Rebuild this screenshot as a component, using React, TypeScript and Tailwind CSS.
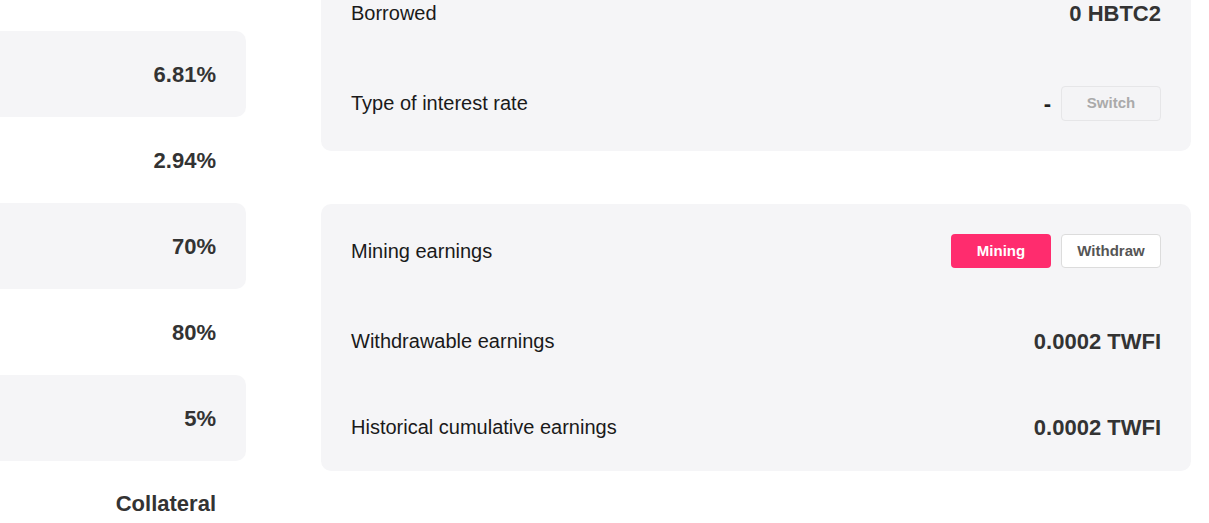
import React from "react";

type Stat = { value: string; shaded: boolean };

const stats: Stat[] = [
  { value: "", shaded: false },
  { value: "6.81%", shaded: true },
  { value: "2.94%", shaded: false },
  { value: "70%", shaded: true },
  { value: "80%", shaded: false },
  { value: "5%", shaded: true },
];

function Row({
  label,
  children,
  tall,
}: {
  label: string;
  children: React.ReactNode;
  tall?: boolean;
}) {
  return (
    <div
      className={`flex items-center justify-between px-[30px] ${
        tall ? "h-[94px]" : "h-[86px]"
      }`}
    >
      <span className="text-[20px] text-[#1a1a1a]">{label}</span>
      <div className="flex items-center gap-[10px]">{children}</div>
    </div>
  );
}

function Value({ children }: { children: React.ReactNode }) {
  return <span className="text-[22px] font-bold text-[#333]">{children}</span>;
}

export default function App() {
  return (
    <div className="h-[523px] w-[1209px] overflow-hidden bg-white font-['Liberation_Sans',Arial,sans-serif]">
      <div className="flex gap-[75px]">
        {/* left stats column */}
        <div className="-mt-[55px] w-[246px] shrink-0">
          {stats.map((s, i) => (
            <div
              key={i}
              className={`flex h-[86px] items-center justify-end rounded-r-[10px] pr-[30px] ${
                s.shaded ? "bg-[#f5f5f7]" : ""
              }`}
            >
              <span className="text-[22px] font-bold text-[#333]">{s.value}</span>
            </div>
          ))}
          <div className="flex h-[84px] items-center justify-end pr-[30px]">
            <span className="text-[22px] font-bold text-[#333]">Collateral</span>
          </div>
        </div>

        {/* right cards */}
        <div className="mr-[18px] flex flex-1 flex-col gap-[53px]">
          <div className="-mt-[34px] rounded-b-[10px] bg-[#f5f5f7] pb-[5px]">
            <Row label="Borrowed" tall>
              <Value>0 HBTC2</Value>
            </Row>
            <Row label="Type of interest rate">
              <span className="text-[22px] font-bold text-[#222]">-</span>
              <button className="h-[35px] w-[100px] rounded-[4px] border border-[#e6e6e8] bg-[#f4f4f6] text-[15px] font-bold text-[#aaa]">
                Switch
              </button>
            </Row>
          </div>

          <div className="rounded-[10px] bg-[#f5f5f7] pb-px">
            <Row label="Mining earnings" tall>
              <button className="h-[34px] w-[100px] rounded-[4px] bg-[#ff2c6e] text-[15px] font-bold text-white">
                Mining
              </button>
              <button className="h-[34px] w-[100px] rounded-[4px] border border-[#dcdcdc] bg-white text-[15px] font-bold text-[#555]">
                Withdraw
              </button>
            </Row>
            <Row label="Withdrawable earnings">
              <Value>0.0002 TWFI</Value>
            </Row>
            <Row label="Historical cumulative earnings">
              <Value>0.0002 TWFI</Value>
            </Row>
          </div>
        </div>
      </div>
    </div>
  );
}
